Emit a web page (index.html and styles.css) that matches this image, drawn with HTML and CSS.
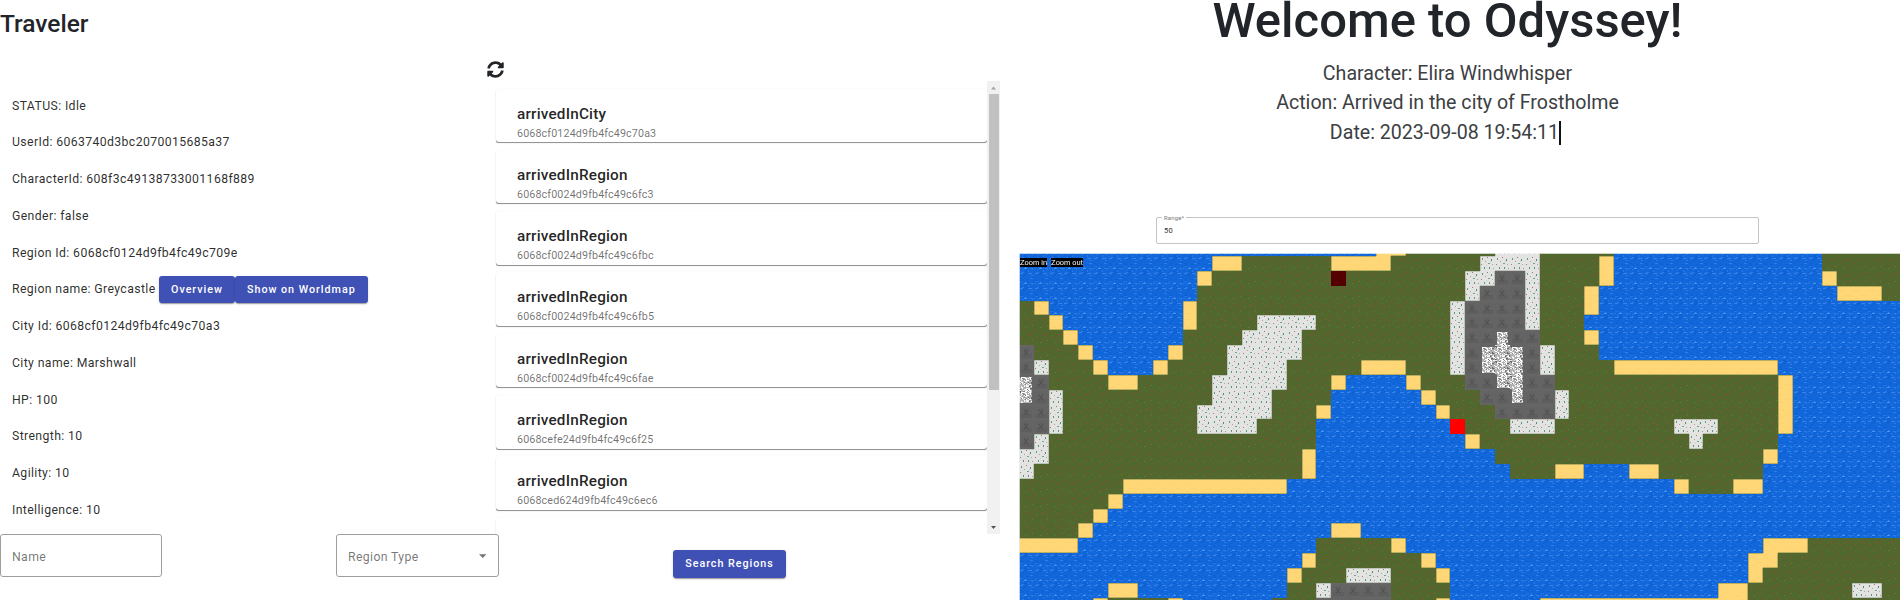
FILE: index.html
```html
<!DOCTYPE html>
<html lang="en">
<head>
<meta charset="utf-8">
<title>Odyssey</title>
<link rel="stylesheet" href="styles.css">
</head>
<body>
<div class="app">
  <section class="traveler">
    <h2 class="traveler-title">Traveler</h2>
    <div class="traveler-body">
      <ul class="stats">
        <li><span>STATUS: Idle</span></li>
        <li><span>UserId: 6063740d3bc2070015685a37</span></li>
        <li><span>CharacterId: 608f3c49138733001168f889</span></li>
        <li><span>Gender: false</span></li>
        <li><span>Region Id: 6068cf0124d9fb4fc49c709e</span></li>
        <li><span>Region name: Greycastle</span><button class="btn btn-first">Overview</button><button class="btn">Show on Worldmap</button></li>
        <li><span>City Id: 6068cf0124d9fb4fc49c70a3</span></li>
        <li><span>City name: Marshwall</span></li>
        <li><span>HP: 100</span></li>
        <li><span>Strength: 10</span></li>
        <li><span>Agility: 10</span></li>
        <li><span>Intelligence: 10</span></li>
      </ul>
      <div class="log">
        <svg class="refresh" viewBox="0 0 512 512"><path d="M370.72 133.28C339.458 104.008 298.888 87.962 255.848 88c-77.458.068-144.328 53.178-162.791 126.85-1.344 5.363-6.122 9.15-11.651 9.15H24.103c-7.498 0-13.194-6.807-11.807-14.176C33.933 94.924 134.813 8 256 8c66.448 0 126.791 26.136 171.315 68.685L463.03 40.97C478.149 25.851 504 36.559 504 57.941V192c0 13.255-10.745 24-24 24H345.941c-21.382 0-32.09-25.851-16.971-40.971l41.75-41.749zM32 296h134.059c21.382 0 32.09 25.851 16.971 40.971l-41.75 41.75c31.262 29.273 71.835 45.319 114.876 45.28 77.418-.07 144.315-53.144 162.787-126.849 1.344-5.363 6.122-9.15 11.651-9.15h57.304c7.498 0 13.194 6.807 11.807 14.176C478.067 417.076 377.187 504 256 504c-66.448 0-126.791-26.136-171.315-68.685L48.97 471.03C33.851 486.149 8 475.441 8 454.059V320c0-13.255 10.745-24 24-24z"/></svg>
        <div class="scroller">
          <div class="cards">
            <article class="card"><h3>arrivedInCity</h3><p>6068cf0124d9fb4fc49c70a3</p></article>
            <article class="card"><h3>arrivedInRegion</h3><p>6068cf0024d9fb4fc49c6fc3</p></article>
            <article class="card"><h3>arrivedInRegion</h3><p>6068cf0024d9fb4fc49c6fbc</p></article>
            <article class="card"><h3>arrivedInRegion</h3><p>6068cf0024d9fb4fc49c6fb5</p></article>
            <article class="card"><h3>arrivedInRegion</h3><p>6068cf0024d9fb4fc49c6fae</p></article>
            <article class="card"><h3>arrivedInRegion</h3><p>6068cefe24d9fb4fc49c6f25</p></article>
            <article class="card"><h3>arrivedInRegion</h3><p>6068ced624d9fb4fc49c6ec6</p></article>
            <article class="card"></article>
          </div>
          <div class="scrollbar">
            <svg class="arrow" viewBox="0 0 12 13"><path fill="#a3a3a3" d="M3.5 8.5 6 5.5l2.500 3z"/></svg>
            <div class="thumb"></div>
            <svg class="arrow" viewBox="0 0 12 13"><path fill="#505050" d="M3.500 5 6 8l2.500-3z"/></svg>
          </div>
        </div>
      </div>
    </div>
    <form class="search">
      <div class="field"><span>Name</span></div>
      <div class="field"><span>Region Type</span><svg class="caret" viewBox="0 0 8 4"><path d="M0 0h8L4 4z"/></svg></div>
      <button type="button" class="btn btn-search">Search Regions</button>
    </form>
  </section>
  <section class="world">
    <header class="welcome">
      <h1>Welcome to Odyssey!</h1>
      <p>Character: Elira Windwhisper</p>
      <p>Action: Arrived in the city of Frostholme</p>
      <p class="typed">Date: 2023-09-08 19:54:11<i class="cursor"></i></p>
    </header>
    <div class="range"><span class="range-label">Range*</span><span>50</span></div>
    <div class="map">
      <canvas id="map" width="881" height="347"></canvas>
      <div class="zoom"><span>Zoom in</span><span>Zoom out</span></div>
    </div>
  </section>
</div>
<script src="map.js"></script>
</body>
</html>
```

FILE: styles.css
```css
* { box-sizing: border-box; }
body {
  margin: 0;
  width: 1901px;
  height: 600px;
  overflow: hidden;
  background: #fff;
  color: #212529;
  font-family: Roboto, "Liberation Sans", sans-serif;
}
h1, h2, h3, p, ul { margin: 0; padding: 0; }
h1, h2, h3 { font-weight: 500; }
.app { display: flex; height: 600px; }
.traveler { width: 1019px; }
.traveler-title { height: 54px; padding-top: 9px; font-size: 24.5px; line-height: 30px; }
.traveler-body { display: flex; height: 480px; }
.stats { width: 487px; padding-top: 33.200px; list-style: none; }
.stats li {
  display: flex;
  align-items: center;
  height: 36.75px;
  padding-left: 12px;
  font-size: 12.25px;
  letter-spacing: 0.38px;
  color: rgba(0, 0, 0, 0.84);
}
.btn {
  height: 27.5px;
  padding: 0 12px;
  border: 0;
  border-radius: 3px;
  background: #3f51b5;
  color: #fff;
  font: 500 10.72px Roboto, sans-serif;
  letter-spacing: 0.99px;
  white-space: nowrap;
  box-shadow: 0 2px 1px -1px rgba(0, 0, 0, 0.2), 0 1px 1px rgba(0, 0, 0, 0.14), 0 1px 3px rgba(0, 0, 0, 0.12);
}
.btn-first { margin-left: 3.500px; }
.log { width: 515px; }
.refresh { display: block; width: 17px; height: 17px; margin: 7px 0 3px; fill: #212529; }
.scroller { display: flex; height: 452.5px; overflow: hidden; }
.cards { flex: none; width: 491px; margin-left: 9px; padding-top: 7.5px; }
.card {
  height: 53.7px;
  margin-bottom: 7.6px;
  padding: 14px 12px 0;
  border-radius: 3px;
  box-shadow: 0 1.5px 0.8px -0.8px rgba(0, 0, 0, 0.3), 0 0.8px 0.8px -0.4px rgba(0, 0, 0, 0.2), 0 0 1.5px rgba(0, 0, 0, 0.07);
}
.card h3 { padding-left: 9px; font-size: 15.3px; line-height: 22px; letter-spacing: 0.2px; color: rgba(0, 0, 0, 0.87); }
.card p { padding-left: 9px; font-size: 10.72px; line-height: 17px; letter-spacing: 0.13px; color: rgba(0, 0, 0, 0.57); }
.scrollbar { flex: none; display: flex; flex-direction: column; width: 13px; background: #f1f1f1; }
.arrow { width: 13px; height: 13px; }
.thumb { width: 10px; height: 295.500px; margin: 0 0 auto 1.500px; background: #c1c1c1; }
.search { display: grid; grid-template-columns: 162px 163px 113px; column-gap: 174px; align-items: start; }
.field {
  display: flex;
  align-items: center;
  justify-content: space-between;
  height: 43px;
  padding: 3px 12px 0 11px;
  border: 1px solid #9e9e9e;
  border-radius: 3px;
  font-size: 12.25px;
  letter-spacing: 0.38px;
  color: rgba(0, 0, 0, 0.55);
}
.caret { width: 7.500px; height: 4px; margin-top: -2px; fill: #757575; }
.btn-search { width: 113px; margin-top: 16px; padding: 0; }
.world { width: 882px; }
.welcome { height: 217px; padding-right: 25px; text-align: center; }
.welcome h1 { height: 59px; font-size: 49px; line-height: 42px; }
.welcome p { font-size: 19.6px; line-height: 29.4px; color: #3c4043; }
.typed { display: flex; align-items: center; justify-content: center; }
.cursor { width: 2px; height: 24px; margin: 0 4px 0 0; background: #111; }
.range {
  position: relative;
  width: 603px;
  height: 27px;
  margin-left: 137px;
  padding: 0 7px;
  border: 1px solid #c4c4c4;
  border-radius: 2px;
  font-size: 7.500px;
  line-height: 25px;
  letter-spacing: 0.2px;
  color: #333;
}
.range-label { position: absolute; left: 5px; top: -4px; padding: 0 2px; background: #fff; font-size: 5.900px; line-height: 8px; color: #777; }
.map { position: relative; height: 347px; margin-top: 9px; }
#map { display: block; }
.zoom { position: absolute; left: 1px; top: 5px; display: flex; gap: 4px; font: 7.500px/9px "Liberation Sans", sans-serif; color: #fff; }
.zoom span { background: #000; }
```

FILE: map.js
```javascript
// Terrain rows as run lengths: W water, G grass, S sand, N snow, M mountain,
// P peak, D town, R current position.
const rows = [
  'W24 S2 G6 N3 G5 W14 G6',
  'W13 S2 G6 S4 G6 N4 G4 S1 W14 G6',
  'W12 S1 G8 D1 G8 N2 M2 N1 G4 S1 W14 S1 G5',
  'W12 G18 N1 M3 N1 G3 S1 W16 S3 G2',
  'G1 S1 W9 S1 G17 N1 M4 N1 G3 S1 W21',
  'G2 S1 W8 S1 G4 N4 G9 N1 M4 N1 G3 W22',
  'G3 S1 W7 G4 N4 G10 N1 M2 P1 M2 G3 S1 W21',
  'M1 G3 S1 W5 S1 G3 N5 G10 N1 M1 P3 M1 N1 G3 W21',
  'M1 N1 G3 S1 W3 S1 G4 N4 G5 S3 G3 N1 M1 P3 M1 N1 G4 S11 W9',
  'P1 M1 G4 S2 G5 N5 G3 S1 W4 S1 G3 M2 P2 M2 G15 S1 W8',
  'P1 M1 N1 G10 N4 G4 W6 S1 G3 M2 P1 M2 N1 G14 S1 W8',
  'M2 N1 G9 N5 G3 S1 W7 S1 G3 M4 N1 G14 S1 W8',
  'M2 N1 G9 N4 G4 W9 R1 G3 N3 G8 N3 G4 S1 W8',
  'M1 N1 G18 W10 S1 G14 N1 G5 W9',
  'N2 G17 S1 W12 G18 S1 W9',
  'N1 G18 S1 W13 G3 S2 W3 S2 G7 W10',
  'G7 S11 W26 S1 G3 S2 W10',
  'G6 S1 W53',
  'G5 S1 W54',
  'G4 S1 W16 S2 W37',
  'S4 W16 G5 S1 W24 S3 G7',
  'W19 S1 G7 S1 W21 S2 G9',
  'W18 S1 G3 N3 G3 S1 W20 S1 G10',
  'W6 S2 W10 G2 N1 M4 G4 W18 S2 G7 N2 G2',
  'W5 S1 G4 S1 W6 G3 M1 P2 M2 G3 S1 W6 S14 G11'
].map(r => r.split(' ').map(t => t[0].repeat(+t.slice(1))).join(''));

const base = { W: '#1268db', G: '#51672e', S: '#ffd777', N: '#e3e3e1', M: '#646464', P: '#b4b4b4', D: '#550000', R: '#ff0000' };

// Speckles inside one 15px tile: [x, y, width, height, colour].
const marks = { S: [[1, 4, 6, 1, '#fdd371'], [8, 9, 6, 1, '#fdd371'], [3, 12, 4, 1, '#fbd272']], R: [], D: [[3, 4, 1, 1, '#6b0909'], [9, 7, 2, 1, '#420000'], [5, 11, 2, 1, '#690606']] };
let seed = 7;
const rnd = n => { seed = (seed * 16807) % 2147483647; return seed % n; };
marks.W = [];
for (let i = 0; i < 34; i++) marks.W.push([rnd(14), rnd(15), 1 + rnd(3), 1, ['#2476e5', '#0d60cf', '#2b7ae6', '#0b62d4'][rnd(4)]]);
marks.W.push([5, 12, 3, 1, '#4f93f2'], [6, 11, 1, 1, '#3c85ed'], [1, 2, 3, 1, '#3a82ea'], [9, 2, 4, 1, '#3a82ea'], [11, 7, 3, 1, '#2f7de8']);
marks.G = [];
for (let i = 0; i < 66; i++) marks.G.push([rnd(15), rnd(15), 1, 1, ['#685c32', '#5d6330', '#427331', '#3f7729', '#7a5530', '#695a31'][rnd(6)]]);
marks.G.push([3, 6, 1, 1, '#94502f'], [9, 4, 1, 1, '#94502f'], [12, 5, 1, 1, '#8c5030'], [6, 12, 1, 1, '#3f8f2c'], [13, 10, 1, 1, '#3f8f2c']);
marks.N = [[2, 2, 1, 2, '#5e9c86'], [7, 1, 1, 1, '#a5756c'], [11, 3, 1, 2, '#4d9077'], [5, 5, 1, 1, '#bd9c96'], [8, 7, 2, 1, '#6ba490'],
  [1, 8, 1, 1, '#a57e78'], [12, 8, 1, 1, '#8fb7a9'], [4, 11, 1, 2, '#579880'], [9, 11, 1, 2, '#61947f'], [13, 12, 1, 1, '#b59790'], [6, 9, 1, 1, '#c3d1cc'], [10, 5, 1, 1, '#c8cdca']];
marks.M = [[4, 3, 6, 9, '#606060'], [2, 9, 11, 4, '#5e5e5e'], [5, 5, 1, 1, '#4c4c4c'], [6, 6, 2, 3, '#545454'], [8, 5, 1, 1, '#4c4c4c'], [5, 9, 1, 1, '#4c4c4c'], [8, 9, 1, 1, '#4c4c4c'], [0, 0, 15, 1, '#676767']];
marks.P = [];
for (let i = 0; i < 150; i++) marks.P.push([rnd(15), rnd(15), 1 + rnd(2), 1, ['#fff', '#fff', '#666', '#888', '#e6e6e6', '#aaa'][rnd(6)]]);

const ctx = document.getElementById('map').getContext('2d');
const colX = c => Math.round(14.883 * c - 0.2);
const rowY = r => Math.round(3 + 14.86 * (r - 1));
const at = (r, c) => (rows[r] || '')[c];

rows.forEach((row, r) => [...row].forEach((kind, c) => {
  const x = colX(c), y = rowY(r), w = colX(c + 1) - x, h = rowY(r + 1) - y;
  ctx.save();
  ctx.beginPath();
  ctx.rect(x, y, w, h);
  ctx.clip();
  ctx.fillStyle = base[kind];
  ctx.fillRect(x, y, w, h);
  for (const [mx, my, mw, mh, color] of marks[kind]) {
    ctx.fillStyle = color;
    ctx.fillRect(x + mx, y + my, mw, mh);
  }
  // Rocky rim where a peak meets the mountain around it
  if (kind === 'P') {
    ctx.fillStyle = base.M;
    if (at(r, c - 1) === 'M') ctx.fillRect(x, y, 2, h);
    if (at(r, c + 1) === 'M') ctx.fillRect(x + w - 2, y, 2, h);
    if (at(r - 1, c) === 'M') ctx.fillRect(x, y, w, 2);
    if (at(r + 1, c) === 'M') ctx.fillRect(x, y + h - 2, w, 2);
  }
  // Soft shadow along the edges of sand and snow
  if (kind === 'S' || kind === 'N') {
    ctx.fillStyle = kind === 'S' ? 'rgba(90,110,60,.4)' : 'rgba(80,100,70,.25)';
    if (at(r, c - 1) !== kind) ctx.fillRect(x, y, 1, h);
    if (at(r, c + 1) !== kind) ctx.fillRect(x + w - 1, y, 1, h);
    if (at(r - 1, c) !== kind) ctx.fillRect(x, y, w, 1);
    if (at(r + 1, c) !== kind) ctx.fillRect(x, y + h - 1, w, 1);
  }
  ctx.restore();
}));

ctx.fillStyle = 'rgba(255,255,255,.7)';
ctx.fillRect(0, 0, 881, 1);
ctx.fillRect(0, 0, 1, 347);
```
